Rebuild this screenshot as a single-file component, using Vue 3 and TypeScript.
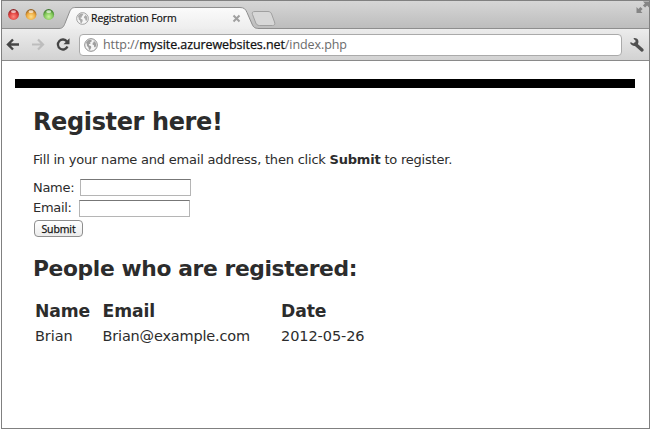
<script setup lang="ts">
import { ref } from 'vue'

interface Registrant {
  name: string
  email: string
  date: string
}

const name = ref('')
const email = ref('')
const registrants: Registrant[] = [
  { name: 'Brian', email: 'Brian@example.com', date: '2012-05-26' },
]
</script>

<template>
  <div class="window">
    <header class="chrome">
      <div class="tabstrip">
        <svg class="strip" width="648" height="28" viewBox="1 1 648 28">
          <defs>
            <linearGradient id="tabFill" x1="0" y1="0" x2="0" y2="1">
              <stop offset="0" stop-color="#fbfbfb" />
              <stop offset="1" stop-color="#ededed" />
            </linearGradient>
            <radialGradient id="red" cx=".5" cy=".7" r=".65">
              <stop offset="0" stop-color="#ff8a80" /><stop offset=".6" stop-color="#e0423f" /><stop offset="1" stop-color="#8d2427" />
            </radialGradient>
            <radialGradient id="amber" cx=".5" cy=".7" r=".65">
              <stop offset="0" stop-color="#ffe08a" /><stop offset=".6" stop-color="#eda93f" /><stop offset="1" stop-color="#936022" />
            </radialGradient>
            <radialGradient id="green" cx=".5" cy=".7" r=".65">
              <stop offset="0" stop-color="#c9f59a" /><stop offset=".6" stop-color="#7fc558" /><stop offset="1" stop-color="#3c7a2b" />
            </radialGradient>
          </defs>
          <path d="M1 28.5H59C63 28.5 64 26 65.500 22L69.500 12C71 8.500 72 7.500 76 7.500H240C244 7.500 245.500 9 247 12.500L252 24C253.500 27.500 255 28.500 259 28.500H649V30H1z" fill="url(#tabFill)" />
          <path d="M1 28.500H59C63 28.500 64 26 65.500 22L69.500 12C71 8.500 72 7.500 76 7.500H240C244 7.500 245.500 9 247 12.500L252 24C253.500 27.500 255 28.500 259 28.500H649" fill="none" stroke="#8e8e8e" />
          <path d="M255 11.500H268C270 11.500 271 12.500 271.600 14L274.500 22C275.300 24.500 274.500 25.500 272.500 25.500H259.500C257.500 25.500 256.500 24.500 255.800 23L252.500 14.500C251.800 12.500 252.500 11.500 255 11.500z" fill="#d7d7d7" stroke="#a0a0a0" />
          <circle cx="13.500" cy="14.500" r="5.400" fill="url(#red)" />
          <circle cx="31" cy="14.500" r="5.400" fill="url(#amber)" />
          <circle cx="48.700" cy="14.500" r="5.400" fill="url(#green)" />
          <g fill="#fff" opacity=".65">
            <ellipse cx="13.500" cy="11.700" rx="2.500" ry="1.400" />
            <ellipse cx="31" cy="11.700" rx="2.500" ry="1.400" />
            <ellipse cx="48.700" cy="11.700" rx="2.500" ry="1.400" />
          </g>
          <path d="M233.500 15.500l6 6m0-6l-6 6" stroke="#a0a0a0" stroke-width="2" fill="none" />
          <g fill="#858585">
            <path d="M636.500 7v6h6l-1.900-1.900 2-2-2.200-2.200-2 2z" />
            <path d="M649 7.500V1.500H643l1.900 1.900-2 2 2.200 2.200 2-2z" />
          </g>
        </svg>
        <div class="tab">
          <svg class="globe" width="13" height="13" viewBox="0 0 14 14">
            <circle cx="7" cy="7" r="6.300" fill="#f5f5f5" stroke="#999" />
            <path d="M2 4.200L4.500 1.900 7.300 1.700 7.900 3.200 6.200 4.200 6.500 5.700 4.800 6.200 5.200 7.400 7 8 7.200 9.700 5.900 12 4.800 11.500 4.500 9.500 3 8 2.700 6z M9.200 2.300L11.700 4.500 12.300 7.200 11.300 9.600 10.100 9 10 7.200 8.500 6.500 8.700 4.800 10 4z" fill="#aaa" />
          </svg>
          <span>Registration Form</span>
        </div>
      </div>
      <div class="toolbar">
        <svg class="nav" width="78" height="31" viewBox="1 29 78 31">
          <path d="M19 44.500H8.500M13 39.500L8 44.500L13 49.500" fill="none" stroke="#454545" stroke-width="2.400" />
          <path d="M32 44.500H42.500M38 39.500L43 44.500L38 49.500" fill="none" stroke="#bdbdbd" stroke-width="2.200" />
          <path d="M67 41.600A5 5 0 1 0 67.500 46.500" fill="none" stroke="#454545" stroke-width="2.300" />
          <path d="M69.500 38.300V44.300H63.500z" fill="#454545" />
        </svg>
        <div class="address">
          <svg class="globe" width="14" height="14" viewBox="0 0 14 14">
            <circle cx="7" cy="7" r="6.300" fill="#f5f5f5" stroke="#8a8a8a" />
            <path d="M2 4.200L4.500 1.900 7.300 1.700 7.900 3.200 6.200 4.200 6.500 5.700 4.800 6.200 5.200 7.400 7 8 7.200 9.700 5.900 12 4.800 11.500 4.500 9.500 3 8 2.700 6z M9.200 2.300L11.700 4.500 12.300 7.200 11.300 9.600 10.100 9 10 7.200 8.500 6.500 8.700 4.800 10 4z" fill="#9e9e9e" />
          </svg>
          <span class="url"><span class="scheme">http://</span><span class="host">mysite.azurewebsites.net</span><span class="path">/index.php</span></span>
        </div>
        <svg class="wrench" width="16" height="16" viewBox="0 0 16 16">
          <path d="M6.200 7L13 13" stroke="#505050" stroke-width="3.400" stroke-linecap="round" />
          <path d="M5.200 1C8.500.7 10.500 3.800 9 6.800 7.300 9.700 3.500 9.800 1.300 6.500L1.600 5 4.300 6.400 6.400 5.500 6.500 3.400 4.400 1.700z" fill="#505050" />
        </svg>
      </div>
    </header>

    <main class="page">
      <div class="rule"></div>
      <div class="content">
        <h1>Register here!</h1>
        <p>Fill in your name and email address, then click <strong>Submit</strong> to register.</p>
        <form @submit.prevent>
          <div class="field"><label for="name">Name:</label><input id="name" v-model="name" type="text" /></div>
          <div class="field email"><label for="email">Email:</label><input id="email" v-model="email" type="text" /></div>
          <button type="submit">Submit</button>
        </form>
        <h2>People who are registered:</h2>
        <div class="table">
          <div class="row head"><span>Name</span><span>Email</span><span>Date</span></div>
          <div v-for="r in registrants" :key="r.email" class="row">
            <span>{{ r.name }}</span><span class="mail">{{ r.email }}</span><span>{{ r.date }}</span>
          </div>
        </div>
      </div>
    </main>
  </div>
</template>

<style>
body { background: #fff; overflow: hidden; }
</style>

<style scoped>
* { box-sizing: border-box; }
.window {
  width: 649px;
  height: 429px;
  margin-left: 1px;
  border: 1px solid #808080;
  font-family: "DejaVu Sans", Verdana, sans-serif;
  color: #2c2c2c;
  background: #fff;
  overflow: hidden;
}
.tabstrip {
  display: grid;
  height: 28px;
  background: linear-gradient(#d6d6d6, #bcbcbc);
}
.strip, .tab { grid-area: 1 / 1; }
.strip { display: block; margin-left: -1px; }
.tab {
  display: flex;
  align-items: center;
  height: 20px;
  margin-top: 7px;
  padding-left: 74px;
  gap: 2px;
  font: 10.5px/20px "Open Sans", "Noto Sans", sans-serif;
  letter-spacing: -0.1px;
  color: #111;
  -webkit-text-stroke: .2px #111;
  white-space: nowrap;
}
.globe { flex: none; }
.toolbar {
  display: flex;
  align-items: center;
  height: 32px;
  background: linear-gradient(#ececec, #d2d2d2);
  border-bottom: 1px solid #8a8a8a;
}
.nav { flex: none; margin-left: -1px; }
.address {
  display: flex;
  align-items: center;
  width: 543px;
  height: 22px;
  margin-top: 1px;
  padding-left: 4px;
  gap: 5px;
  background: #fff;
  border: 1px solid #aaa;
  border-radius: 4px;
}
.url {
  font: 12.5px/20px "Open Sans", "Noto Sans", sans-serif;
  letter-spacing: -0.08px;
  white-space: nowrap;
}
.scheme, .path { color: #6b6b6b; }
.host { color: #111; -webkit-text-stroke: .25px #111; }
.wrench { margin-left: 7px; }
.page { padding: 18px 14px 0 13px; }
.rule { height: 9px; background: #000; }
.content { padding: 19px 0 0 18px; white-space: nowrap; }
h1, h2 {
  margin: 0;
  font-size: 24px;
  line-height: 30px;
  font-weight: 700;
  letter-spacing: -0.38px;
}
p { margin: 13px 0 0; font-size: 13px; line-height: 20px; letter-spacing: -0.21px; }
form { padding-top: 7px; }
.field { display: flex; align-items: center; height: 20px; font-size: 13px; letter-spacing: -0.3px; }
.field.email { height: 22px; }
label { width: 47px; line-height: 18px; margin-top: 1px; }
.email label { width: 46px; margin-top: 0; }
input {
  width: 111px;
  height: 17px;
  padding: 1px;
  border: 1px solid #b5b5b5;
  border-top-color: #777;
  background: #fff;
  outline: none;
}
button {
  display: block;
  width: 49px;
  height: 17px;
  margin: 1px 0 0 1px;
  padding: 0;
  border: 1px solid #8e8e8e;
  border-radius: 4px;
  background: linear-gradient(#fff, #ececec);
  color: #111;
  font: 10.5px/14px "Open Sans", sans-serif;
  letter-spacing: -0.1px;
  -webkit-text-stroke: .25px #111;
}
h2 { margin-top: 17px; font-size: 21.8px; letter-spacing: -0.38px; }
.table { padding: 15px 0 0 2px; }
.row {
  display: grid;
  grid-template-columns: 67.5px 178.500px 100px;
  height: 25px;
  font-size: 14.5px;
  line-height: 24px;
  letter-spacing: -0.08px;
}
.mail { letter-spacing: -0.18px; }
.head { font-size: 17.2px; font-weight: 700; letter-spacing: -0.1px; }
</style>
